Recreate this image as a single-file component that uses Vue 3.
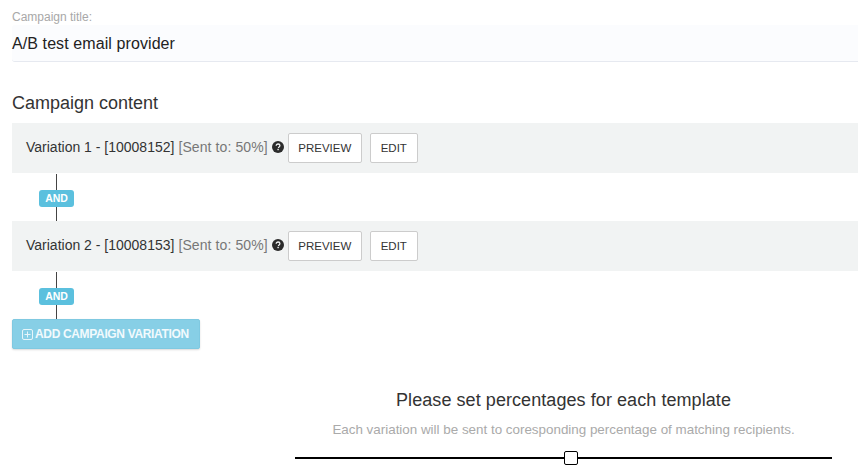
<script setup>
const variations = [
  { id: 1, code: '10008152' },
  { id: 2, code: '10008153' },
]
</script>

<template>
  <div class="page">
    <label class="field-label">Campaign title:</label>
    <div class="title-input">A/B test email provider</div>

    <h2 class="section-title">Campaign content</h2>

    <template v-for="v in variations" :key="v.id">
      <div class="variation">
        <span class="var-name">Variation {{ v.id }} - [{{ v.code }}]</span>
        <span class="var-sent">[Sent to: 50%]</span>
        <svg class="help" viewBox="0 0 12 12" width="12" height="12">
          <circle cx="6" cy="6" r="6" fill="#2b2b2b" />
          <path d="M4.2 4.7c0-1.1.8-1.7 1.9-1.7 1 0 1.8.6 1.8 1.6 0 .7-.4 1-.9 1.4-.4.3-.5.4-.5.9" fill="none" stroke="#f1f3f3" stroke-width="1.3" />
          <rect x="5.4" y="7.8" width="1.4" height="1.4" fill="#f1f3f3" />
        </svg>
        <button class="btn preview">PREVIEW</button>
        <button class="btn edit">EDIT</button>
      </div>
      <div class="connector">
        <span class="line top"></span>
        <span class="badge">AND</span>
        <span class="line"></span>
      </div>
    </template>

    <button class="add-btn">
      <svg viewBox="0 0 11 11" width="11" height="11">
        <rect x=".5" y=".5" width="10" height="10" rx="1.5" fill="none" stroke="#e6f5fa" />
        <path d="M5.5 2.5v6M2.5 5.5h6" stroke="#e6f5fa" />
      </svg>
      <span>ADD CAMPAIGN VARIATION</span>
    </button>

    <section class="percent">
      <h3>Please set percentages for each template</h3>
      <p>Each variation will be sent to coresponding percentage of matching recipients.</p>
      <div class="slider"><span class="thumb"></span></div>
    </section>
  </div>
</template>

<style scoped>
.page {
  box-sizing: border-box;
  width: 858px;
  height: 475px;
  overflow: hidden;
  padding: 11px 0 0 12px;
  background: #fff;
  font-family: "Liberation Sans", Arial, sans-serif;
  color: #333;
}
.field-label {
  display: block;
  height: 14px;
  font-size: 12px;
  line-height: 13px;
  color: #a8a8a8;
}
.title-input {
  box-sizing: border-box;
  height: 37px;
  padding-top: 1px;
  line-height: 35px;
  font-size: 16px;
  letter-spacing: .09px;
  color: #222;
  background: #fbfcfe;
  border-bottom: 1px solid #e6e9f0;
  border-radius: 3px 0 0 3px;
}
.section-title {
  margin: 32px 0 0;
  height: 29px;
  font-size: 18px;
  line-height: 18px;
  font-weight: 400;
  color: #333;
}
.variation {
  display: flex;
  align-items: center;
  height: 50px;
  padding-left: 14px;
  background: #f1f3f3;
  font-size: 14px;
}
.var-name { color: #333; margin-bottom: 2px; }
.var-sent { margin-left: 4px; margin-bottom: 2px; color: #777; letter-spacing: .1px; }
.help { margin-left: 4px; margin-bottom: 2px; flex: none; }
.btn {
  box-sizing: border-box;
  height: 30px;
  padding: 0;
  background: #fff;
  border: 1px solid #ccc;
  border-radius: 2px;
  font-family: inherit;
  font-size: 11.5px;
  color: #333;
}
.preview { width: 74px; margin-left: 4px; }
.edit { width: 48px; margin-left: 8px; }
.connector {
  display: flex;
  flex-direction: column;
  align-items: center;
  width: 35px;
  margin-left: 27px;
  height: 48px;
  padding-top: 1px;
  box-sizing: border-box;
}
.line {
  flex: 1;
  width: 1px;
  background: #444;
}
.line.top {
  flex: none;
  height: 16px;
}
.badge {
  box-sizing: border-box;
  width: 35px;
  height: 17px;
  background: #5bc0de;
  border-radius: 3px;
  color: #fff;
  font-size: 10.5px;
  font-weight: 700;
  line-height: 17px;
  text-align: center;
}
.add-btn {
  display: flex;
  align-items: center;
  gap: 2px;
  box-sizing: border-box;
  width: 188px;
  height: 30px;
  padding: 0 0 0 9px;
  background: #87cfe6;
  border: 1px solid #7fc9e1;
  border-radius: 2px;
  box-shadow: 0 1px 2px rgba(0, 0, 0, .15);
  font-family: inherit;
  font-size: 12px;
  font-weight: 700;
  letter-spacing: -.34px;
  color: #f2fafd;
  white-space: nowrap;
}
.percent {
  width: 537px;
  margin: 41px 0 0 283px;
  text-align: center;
}
.percent h3 {
  margin: 0;
  font-size: 18px;
  line-height: 20px;
  letter-spacing: .07px;
  font-weight: 400;
  color: #333;
}
.percent p {
  margin: 12px 0 0;
  font-size: 13.4px;
  line-height: 16px;
  color: #aaa;
}
.slider {
  position: relative;
  height: 2px;
  margin-top: 19px;
  background: #000;
}
.thumb {
  position: absolute;
  left: 269px;
  top: -6px;
  box-sizing: border-box;
  width: 14px;
  height: 14px;
  background: #fff;
  border: 1px solid #000;
  border-radius: 2px;
}
</style>
